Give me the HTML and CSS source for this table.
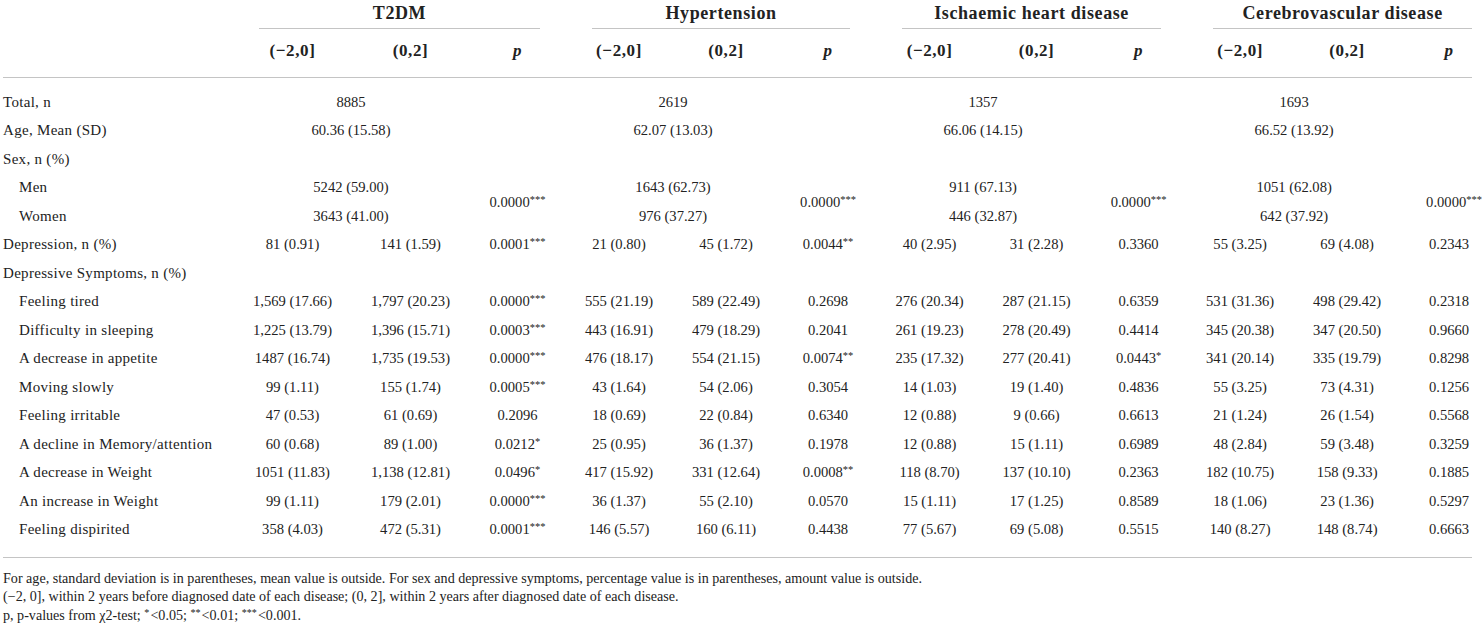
FILE: index.html
```html
<!DOCTYPE html>
<html lang="en">
<head>
<meta charset="utf-8">
<title>Table</title>
<link rel="stylesheet" href="styles.css">
</head>
<body>
<div class="wrap">
<table class="tbl">
<colgroup>
<col class="c-lbl"><col class="c-a1"><col class="c-a2"><col class="c-ap">
<col class="c-b1"><col class="c-b2"><col class="c-bp">
<col class="c-c1"><col class="c-c2"><col class="c-cp">
<col class="c-d1"><col class="c-d2"><col class="c-dp">
</colgroup>
<thead>
<tr class="r-grp">
<th></th>
<th colspan="3"><div class="grp">T2DM</div></th>
<th colspan="3"><div class="grp">Hypertension</div></th>
<th colspan="3"><div class="grp">Ischaemic heart disease</div></th>
<th colspan="3"><div class="grp grp-last">Cerebrovascular disease</div></th>
</tr>
<tr class="r-sub">
<th></th>
<th>(−2,0]</th><th>(0,2]</th><th><i>p</i></th>
<th>(−2,0]</th><th>(0,2]</th><th><i>p</i></th>
<th>(−2,0]</th><th>(0,2]</th><th><i>p</i></th>
<th>(−2,0]</th><th>(0,2]</th><th class="last"><i>p</i></th>
</tr>
</thead>
<tbody>
<tr class="first">
<td class="lbl">Total, n</td>
<td colspan="2">8885</td><td></td>
<td colspan="2">2619</td><td></td>
<td colspan="2">1357</td><td></td>
<td colspan="2">1693</td><td class="last"></td>
</tr>
<tr>
<td class="lbl">Age, Mean (SD)</td>
<td colspan="2">60.36 (15.58)</td><td></td>
<td colspan="2">62.07 (13.03)</td><td></td>
<td colspan="2">66.06 (14.15)</td><td></td>
<td colspan="2">66.52 (13.92)</td><td class="last"></td>
</tr>
<tr>
<td class="lbl">Sex, n (%)</td>
<td></td><td></td><td></td><td></td><td></td><td></td><td></td><td></td><td></td><td></td><td></td><td class="last"></td>
</tr>
<tr>
<td class="lbl sub">Men</td>
<td colspan="2">5242 (59.00)</td><td rowspan="2">0.0000<sup>***</sup></td>
<td colspan="2">1643 (62.73)</td><td rowspan="2">0.0000<sup>***</sup></td>
<td colspan="2">911 (67.13)</td><td rowspan="2">0.0000<sup>***</sup></td>
<td colspan="2">1051 (62.08)</td><td rowspan="2" class="last">0.0000<sup>***</sup></td>
</tr>
<tr>
<td class="lbl sub">Women</td>
<td colspan="2">3643 (41.00)</td>
<td colspan="2">976 (37.27)</td>
<td colspan="2">446 (32.87)</td>
<td colspan="2">642 (37.92)</td>
</tr>
<tr>
<td class="lbl">Depression, n (%)</td>
<td>81 (0.91)</td><td>141 (1.59)</td><td>0.0001<sup>***</sup></td>
<td>21 (0.80)</td><td>45 (1.72)</td><td>0.0044<sup>**</sup></td>
<td>40 (2.95)</td><td>31 (2.28)</td><td>0.3360</td>
<td>55 (3.25)</td><td>69 (4.08)</td><td class="last">0.2343</td>
</tr>
<tr>
<td class="lbl">Depressive Symptoms, n (%)</td>
<td></td><td></td><td></td><td></td><td></td><td></td><td></td><td></td><td></td><td></td><td></td><td class="last"></td>
</tr>
<tr>
<td class="lbl sub">Feeling tired</td>
<td>1,569 (17.66)</td><td>1,797 (20.23)</td><td>0.0000<sup>***</sup></td>
<td>555 (21.19)</td><td>589 (22.49)</td><td>0.2698</td>
<td>276 (20.34)</td><td>287 (21.15)</td><td>0.6359</td>
<td>531 (31.36)</td><td>498 (29.42)</td><td class="last">0.2318</td>
</tr>
<tr>
<td class="lbl sub">Difficulty in sleeping</td>
<td>1,225 (13.79)</td><td>1,396 (15.71)</td><td>0.0003<sup>***</sup></td>
<td>443 (16.91)</td><td>479 (18.29)</td><td>0.2041</td>
<td>261 (19.23)</td><td>278 (20.49)</td><td>0.4414</td>
<td>345 (20.38)</td><td>347 (20.50)</td><td class="last">0.9660</td>
</tr>
<tr>
<td class="lbl sub">A decrease in appetite</td>
<td>1487 (16.74)</td><td>1,735 (19.53)</td><td>0.0000<sup>***</sup></td>
<td>476 (18.17)</td><td>554 (21.15)</td><td>0.0074<sup>**</sup></td>
<td>235 (17.32)</td><td>277 (20.41)</td><td>0.0443<sup>*</sup></td>
<td>341 (20.14)</td><td>335 (19.79)</td><td class="last">0.8298</td>
</tr>
<tr>
<td class="lbl sub">Moving slowly</td>
<td>99 (1.11)</td><td>155 (1.74)</td><td>0.0005<sup>***</sup></td>
<td>43 (1.64)</td><td>54 (2.06)</td><td>0.3054</td>
<td>14 (1.03)</td><td>19 (1.40)</td><td>0.4836</td>
<td>55 (3.25)</td><td>73 (4.31)</td><td class="last">0.1256</td>
</tr>
<tr>
<td class="lbl sub">Feeling irritable</td>
<td>47 (0.53)</td><td>61 (0.69)</td><td>0.2096</td>
<td>18 (0.69)</td><td>22 (0.84)</td><td>0.6340</td>
<td>12 (0.88)</td><td>9 (0.66)</td><td>0.6613</td>
<td>21 (1.24)</td><td>26 (1.54)</td><td class="last">0.5568</td>
</tr>
<tr>
<td class="lbl sub">A decline in Memory/attention</td>
<td>60 (0.68)</td><td>89 (1.00)</td><td>0.0212<sup>*</sup></td>
<td>25 (0.95)</td><td>36 (1.37)</td><td>0.1978</td>
<td>12 (0.88)</td><td>15 (1.11)</td><td>0.6989</td>
<td>48 (2.84)</td><td>59 (3.48)</td><td class="last">0.3259</td>
</tr>
<tr>
<td class="lbl sub">A decrease in Weight</td>
<td>1051 (11.83)</td><td>1,138 (12.81)</td><td>0.0496<sup>*</sup></td>
<td>417 (15.92)</td><td>331 (12.64)</td><td>0.0008<sup>**</sup></td>
<td>118 (8.70)</td><td>137 (10.10)</td><td>0.2363</td>
<td>182 (10.75)</td><td>158 (9.33)</td><td class="last">0.1885</td>
</tr>
<tr>
<td class="lbl sub">An increase in Weight</td>
<td>99 (1.11)</td><td>179 (2.01)</td><td>0.0000<sup>***</sup></td>
<td>36 (1.37)</td><td>55 (2.10)</td><td>0.0570</td>
<td>15 (1.11)</td><td>17 (1.25)</td><td>0.8589</td>
<td>18 (1.06)</td><td>23 (1.36)</td><td class="last">0.5297</td>
</tr>
<tr class="final">
<td class="lbl sub">Feeling dispirited</td>
<td>358 (4.03)</td><td>472 (5.31)</td><td>0.0001<sup>***</sup></td>
<td>146 (5.57)</td><td>160 (6.11)</td><td>0.4438</td>
<td>77 (5.67)</td><td>69 (5.08)</td><td>0.5515</td>
<td>140 (8.27)</td><td>148 (8.74)</td><td class="last">0.6663</td>
</tr>
</tbody>
</table>
<div class="notes">
<p>For age, standard deviation is in parentheses, mean value is outside. For sex and depressive symptoms, percentage value is in parentheses, amount value is outside.</p>
<p>(−2, 0], within 2 years before diagnosed date of each disease; (0, 2], within 2 years after diagnosed date of each disease.</p>
<p>p, p-values from <span class="chi">χ</span>2-test; <sup>*</sup>&lt;0.05; <sup>**</sup>&lt;0.01; <sup>***</sup>&lt;0.001.</p>
</div>
</div>
</body>
</html>
```

FILE: styles.css
```css
html, body {
  margin: 0;
  padding: 0;
  background: #ffffff;
}

body {
  font-family: "Liberation Serif", "Times New Roman", serif;
  color: #222222;
}

.wrap {
  padding-left: 3px;
}

.tbl {
  table-layout: fixed;
  width: 1469px;
  border-collapse: collapse;
  border-spacing: 0;
}

.c-lbl { width: 230px; }
.c-a1 { width: 119px; }
.c-a2 { width: 117px; }
.c-ap { width: 97px; }
.c-b1 { width: 106px; }
.c-b2 { width: 108px; }
.c-bp { width: 96px; }
.c-c1 { width: 107px; }
.c-c2 { width: 107px; }
.c-cp { width: 97px; }
.c-d1 { width: 106px; }
.c-d2 { width: 108px; }
.c-dp { width: 71px; }

.tbl th,
.tbl td {
  padding: 0;
  text-align: center;
  vertical-align: middle;
  white-space: nowrap;
}

.r-grp th {
  padding-top: 3px;
  font-size: 18px;
  font-weight: bold;
  letter-spacing: 0.6px;
  line-height: 20px;
}

.grp {
  margin: 0 26px;
  padding-bottom: 5px;
  border-bottom: 1px solid #c4c4c4;
}

.grp-last {
  margin-right: 0;
}

.r-sub th {
  padding: 12px 0 16px;
  font-size: 17px;
  font-weight: bold;
  line-height: 20px;
  letter-spacing: 0.6px;
  border-bottom: 1px solid #c4c4c4;
}

.tbl td {
  font-size: 14.6px;
  line-height: 18.5px;
  padding-top: 5px;
  padding-bottom: 5px;
}

.tbl .last {
  padding-left: 25px;
}

.tbl td.lbl {
  text-align: left;
  font-size: 15px;
  letter-spacing: 0.3px;
}

.tbl td.sub {
  padding-left: 16px;
}

.tbl tr.first td {
  padding-top: 14.75px;
}

.tbl tr.final td {
  padding-bottom: 18px;
  border-bottom: 1px solid #c4c4c4;
}

sup {
  font-size: 0.72em;
  line-height: 0;
  vertical-align: 0.4em;
}

.notes {
  margin-top: 11px;
  font-size: 14.1px;
  line-height: 18.5px;
}

.notes p {
  margin: 0;
}

.notes sup {
  margin-right: 1px;
}
```
